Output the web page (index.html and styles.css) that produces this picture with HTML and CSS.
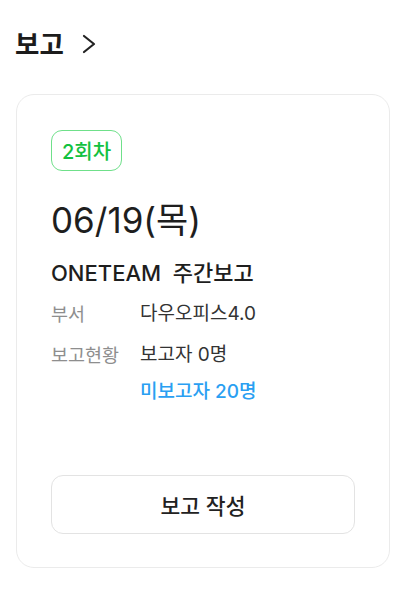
FILE: index.html
```html
<!DOCTYPE html>
<html lang="ko">
<head>
<meta charset="utf-8">
<link rel="stylesheet" href="styles.css">
</head>
<body>
<div class="page">
  <div class="header">
    <span class="title">보고</span>
    <svg class="chev" width="14" height="20" viewBox="0 0 14 20"><path d="M2 2 L12 10 L2 18" fill="none" stroke="#222" stroke-width="2.2" stroke-linecap="round" stroke-linejoin="round"/></svg>
  </div>
  <div class="card">
    <span class="badge">2회차</span>
    <div class="date">06/19(목)</div>
    <div class="name">ONETEAM&nbsp; 주간보고</div>
    <div class="rows">
      <div class="row">
        <div class="label">부서</div>
        <div class="value">다우오피스4.0</div>
      </div>
      <div class="row">
        <div class="label">보고현황</div>
        <div class="values">
          <div class="value">보고자 0명</div>
          <div class="value blue">미보고자 20명</div>
        </div>
      </div>
    </div>
    <button class="btn">보고 작성</button>
  </div>
</div>
</body>
</html>
```
FILE: styles.css
```css
html, body {
  margin: 0;
  padding: 0;
  background: #fff;
}
body {
  font-family: "Inter", "Noto Sans CJK KR", sans-serif;
  color: #222;
}
.page {
  display: flex;
  flex-direction: column;
}
.header {
  display: flex;
  align-items: center;
  gap: 18px;
  padding: 25px 15px 0;
  height: 34px;
}
.title {
  font-size: 26.5px;
  font-weight: 700;
  color: #1c1c1c;
}
.chev {
  margin-top: 3px;
}
.card {
  margin: 35px 19px 0 16px;
  border: 1px solid #ebebeb;
  border-radius: 18px;
  padding: 35px 34px 33px 34px;
  display: flex;
  flex-direction: column;
  align-items: flex-start;
}
.badge {
  display: inline-flex;
  align-items: center;
  justify-content: center;
  width: 69px;
  height: 39px;
  border: 1px solid #6fe08a;
  border-radius: 11px;
  color: #13c13f;
  font-size: 20px;
  font-weight: 500;
}
.date {
  margin-top: 29px;
  font-size: 35px;
  line-height: 40px;
  color: #1e1e1e;
  font-weight: 400;
}
.name {
  margin-top: 19px;
  font-size: 22px;
  line-height: 28px;
  font-weight: 500;
  color: #1e1e1e;
}
.rows {
  margin-top: 14px;
  display: flex;
  flex-direction: column;
  gap: 15px;
}
.row {
  display: flex;
}
.label {
  width: 89px;
  font-size: 18.5px;
  line-height: 26px;
  color: #8e8e8e;
}
.values {
  display: flex;
  flex-direction: column;
  gap: 11px;
}
.value {
  font-size: 19px;
  line-height: 26px;
  color: #333;
  font-weight: 400;
}
.blue {
  color: #2a9ff2;
  font-weight: 500;
}
.btn {
  margin-top: 70px;
  width: 100%;
  height: 59px;
  border: 1px solid #e3e3e3;
  border-radius: 12px;
  background: #fff;
  font-family: inherit;
  font-size: 21.5px;
  font-weight: 500;
  color: #222;
}
```
